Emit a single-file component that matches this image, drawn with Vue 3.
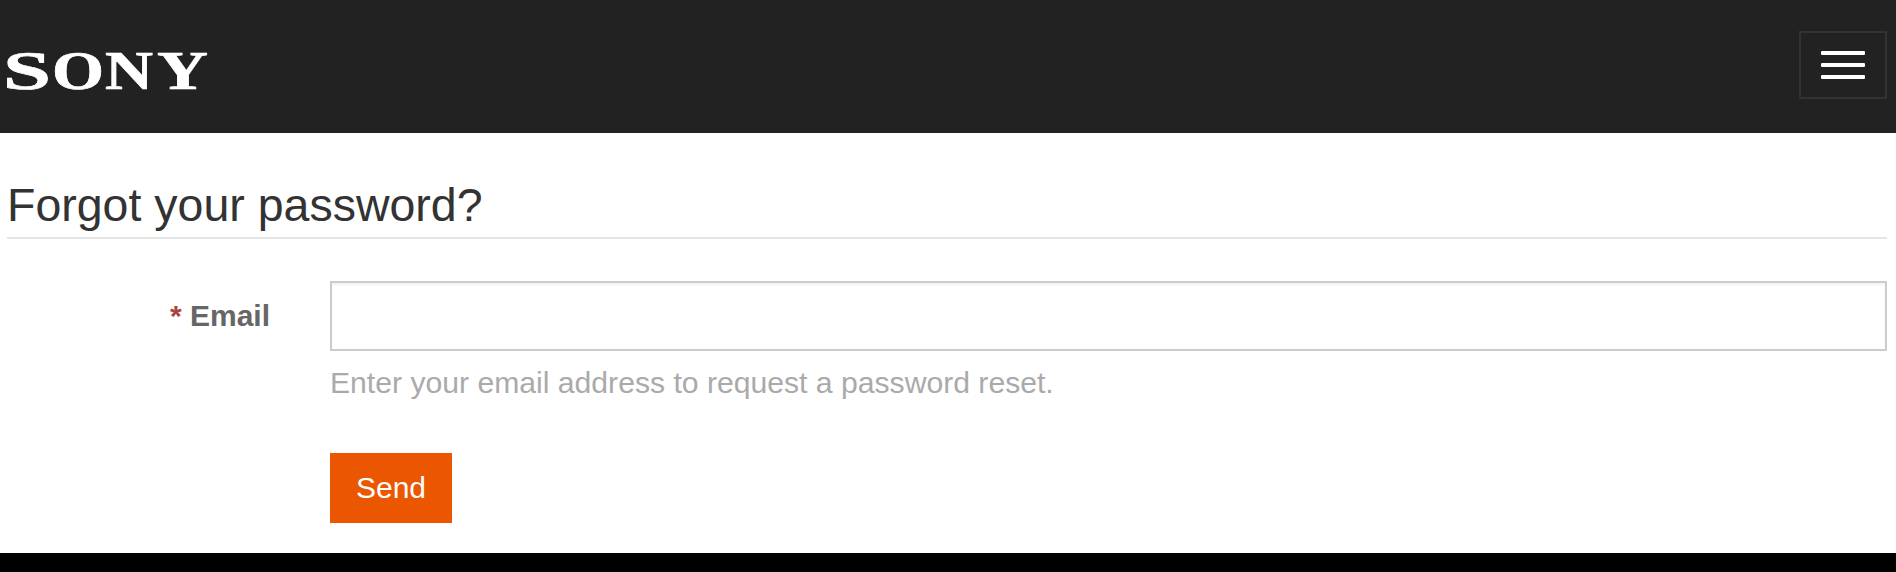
<template>
  <div class="page">
    <header class="topbar">
      <svg class="logo" width="200" height="38" viewBox="0 0 200 38" role="img" aria-label="SONY">
        <text
          v-for="g in logoGlyphs"
          :key="g.ch"
          :x="g.x"
          y="37"
          :textLength="g.w"
          lengthAdjust="spacingAndGlyphs"
        >{{ g.ch }}</text>
      </svg>
      <button class="menu-btn" type="button" aria-label="Menu">
        <span v-for="n in 3" :key="n" class="menu-bar"></span>
      </button>
    </header>

    <main class="content">
      <h1 class="title">Forgot your password?</h1>
      <form class="form" @submit.prevent>
        <div class="row">
          <label class="label" for="email"><span class="req">*</span> Email</label>
          <div class="field">
            <input id="email" v-model="email" class="input" type="text" />
            <p class="help">Enter your email address to request a password reset.</p>
          </div>
        </div>
        <div class="actions">
          <button class="send" type="submit">Send</button>
        </div>
      </form>
    </main>

    <div class="footer"></div>
  </div>
</template>

<script setup>
import { ref } from 'vue'

const email = ref('')

// the wordmark is much wider than any installed serif, so each letter gets its own width
const logoGlyphs = [
  { ch: 'S', x: -4, w: 48 },
  { ch: 'O', x: 45, w: 52 },
  { ch: 'N', x: 98, w: 48 },
  { ch: 'Y', x: 150, w: 51 }
]
</script>

<style>
html,
body {
  margin: 0;
  background: #fff;
}
</style>

<style scoped>
.page {
  height: 572px;
  display: flex;
  flex-direction: column;
  overflow: hidden;
  font-family: "Liberation Sans", Arial, sans-serif;
}

.topbar {
  height: 133px;
  flex: none;
  box-sizing: border-box;
  display: flex;
  align-items: flex-start;
  justify-content: space-between;
  padding: 31px 9px 0 7px;
  background: #222;
}

.logo {
  margin-top: 21px;
  display: block;
  overflow: visible;
}

.logo text {
  font-family: "Liberation Serif", serif;
  font-weight: 700;
  font-size: 55px;
  fill: #fff;
  stroke: #fff;
  stroke-width: 0.7px;
}

.menu-btn {
  width: 88px;
  height: 68px;
  box-sizing: border-box;
  padding: 0;
  display: flex;
  flex-direction: column;
  align-items: center;
  justify-content: center;
  gap: 8px;
  background: transparent;
  border: 2px solid #333;
}

.menu-bar {
  width: 44px;
  height: 4px;
  border-radius: 1px;
  background: #fff;
}

.content {
  flex: 1;
  padding: 0 9px 0 7px;
}

.title {
  margin: 0;
  padding-top: 44px;
  height: 60px;
  line-height: 56px;
  box-sizing: content-box;
  border-bottom: 2px solid #e5e5e5;
  font-size: 46.5px;
  font-weight: 400;
  color: #333;
}

.form {
  margin-top: 42px;
}

.row {
  display: flex;
  align-items: flex-start;
}

.label {
  width: 263px;
  flex: none;
  line-height: 70px;
  text-align: right;
  font-size: 30px;
  font-weight: 700;
  color: #666;
}

.req {
  color: #a94442;
}

.field {
  flex: 1;
  margin-left: 60px;
}

.input {
  display: block;
  width: 100%;
  height: 70px;
  box-sizing: border-box;
  border: 2px solid #ccc;
  background: #fff;
  box-shadow: inset 0 2px 2px rgba(0, 0, 0, 0.05);
  outline: none;
}

.help {
  margin: 15px 0 0;
  line-height: 34px;
  font-size: 30.15px;
  color: #aaa;
}

.actions {
  margin-top: 53px;
  margin-left: 323px;
}

.send {
  width: 122px;
  height: 70px;
  padding: 0;
  border: 0;
  background: #eb5600;
  color: #fff;
  font-family: inherit;
  font-size: 30px;
}

.footer {
  height: 19px;
  flex: none;
  background: #000;
}
</style>
